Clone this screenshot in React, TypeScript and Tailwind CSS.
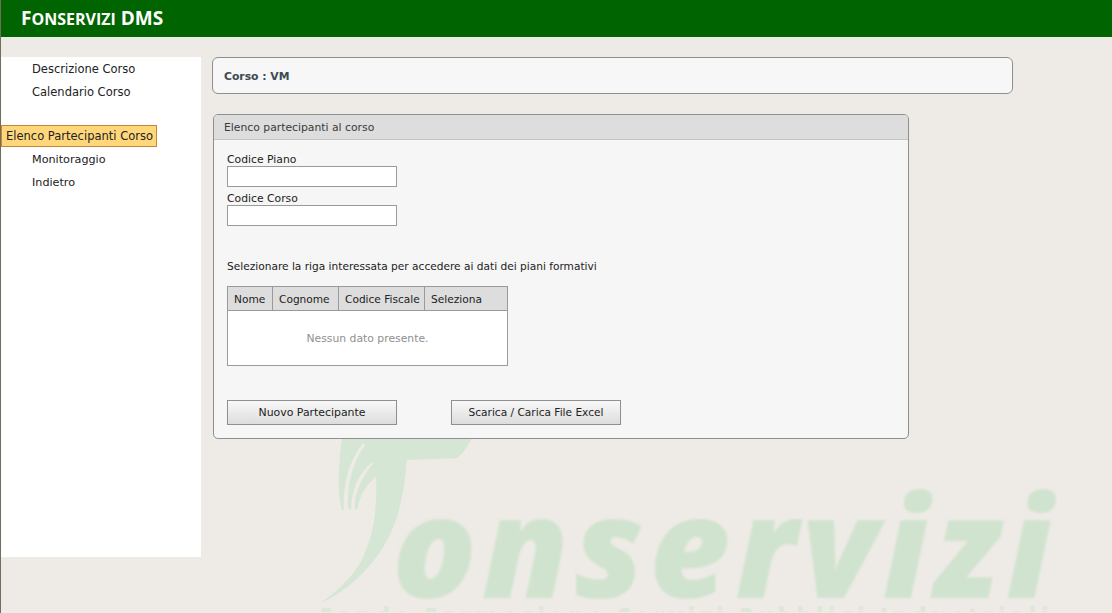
const menuTop = ["Descrizione Corso", "Calendario Corso"];
const menuBottom = ["Monitoraggio", "Indietro"];
const columns = [
  { label: "Nome", width: "w-[45px]" },
  { label: "Cognome", width: "w-[66px]" },
  { label: "Codice Fiscale", width: "w-[86px]" },
  { label: "Seleziona", width: "flex-1" },
];

function Watermark() {
  return (
    <div className="absolute left-0 top-0 w-[1112px] h-[612px] overflow-hidden text-[#d0e3cf] font-['Open_Sans',sans-serif] italic font-extrabold">
      <svg className="absolute left-[299px] top-[430px]" width="400" height="182" viewBox="0 0 1200 546">
        <path d="M130 0 C115 90 110 180 125 240 L132 240 C128 180 140 100 190 38 L195 45 C155 100 140 170 145 238 L153 238 C155 180 175 130 215 98 L220 100 C180 150 160 200 165 238 L172 238 C180 190 200 165 228 140 C232 240 222 320 180 400 C150 450 105 490 60 520 C130 490 200 430 250 350 C295 280 315 180 320 90 L470 85 C490 70 505 50 525 0 Z" fill="#d6e6d4" />
      </svg>
      <div className="absolute left-[391px] top-[449px] text-[140px] leading-[190px] tracking-[5px] whitespace-nowrap blur-[1px]">onservizi</div>
      <div className="absolute left-[319px] top-[600px] text-[22px] leading-[30px] tracking-[5px] not-italic whitespace-nowrap text-[#dbe7d8]">Fondo Formazione Servizi Pubblici Industriali</div>
    </div>
  );
}

function Button({ label, width, size }: { label: string; width: string; size: string }) {
  return (
    <button className={`${width} ${size} h-[25px] pt-[1px] border border-[#8f8f8f] bg-gradient-to-b from-[#f8f8f8] to-[#dddddd] text-[#222222] text-center`}>
      {label}
    </button>
  );
}

export default function App() {
  return (
    <div className="relative w-[1112px] h-[613px] overflow-hidden bg-[#eeebe6] border-l border-[#6f6f5f] font-['DejaVu_Sans',Verdana,sans-serif] text-[10.8px] text-[#222222]">
      <Watermark />
      <header className="relative h-[37px] bg-[#006400] pl-[20px] flex items-center text-white font-['Open_Sans',sans-serif] font-bold text-[19px] leading-none">
        <span>F<span className="text-[16px] uppercase">onservizi</span> DMS</span>
      </header>

      <div className="relative flex items-start pt-[20px]">
        <nav className="w-[200px] h-[500px] bg-white shrink-0 flex flex-col text-[11.5px] text-[#222222] pt-[1px]">
          {menuTop.map((item) => (
            <a key={item} className="h-[23px] leading-[23px] pl-[31px]">{item}</a>
          ))}
          <div className="h-[21px]" />
          <a className="w-[156px] h-[22px] leading-[20px] pl-[4px] bg-[#ffd77a] border border-[#c08a3a] whitespace-nowrap">Elenco Partecipanti Corso</a>
          {menuBottom.map((item) => (
            <a key={item} className="h-[23px] leading-[25px] pl-[31px] text-[11.2px]">{item}</a>
          ))}
        </nav>

        <main className="flex flex-col pl-[11px]">
          <div className="w-[801px] h-[37px] bg-[#f7f7f7] border border-[#8f8f8f] rounded-[6px] flex items-center pl-[11px] pt-[3px] font-bold text-[#3c4a55]">
            Corso : VM
          </div>

          <section className="w-[696px] h-[325px] mt-[20px] ml-[1px] bg-[#f6f6f6] border border-[#8f8f8f] rounded-[5px] overflow-hidden">
            <div className="h-[25px] leading-[25px] bg-[#dddddd] border-b border-[#c4c4c4] pl-[10px] text-[#3a3a3a]">
              Elenco partecipanti al corso
            </div>
            <div className="pl-[13px] pt-[12px] flex flex-col items-start">
              <label className="h-[14px] leading-[16px]">Codice Piano</label>
              <input className="w-[170px] h-[21px] bg-white border border-[#9a9a9a]" />
              <label className="h-[14px] leading-[16px] mt-[4px]">Codice Corso</label>
              <input className="w-[170px] h-[21px] bg-white border border-[#9a9a9a]" />

              <p className="mt-[32px] h-[14px] leading-[16px] text-[10.6px] whitespace-nowrap">Selezionare la riga interessata per accedere ai dati dei piani formativi</p>

              <div className="mt-[14px] w-[281px] h-[80px] border border-[#9a9a9a] bg-white">
                <div className="h-[24px] flex bg-[#dddddd] border-b border-[#9a9a9a] text-[10.6px]">
                  {columns.map((col, i) => (
                    <div key={col.label} className={`${col.width} pl-[6px] leading-[25px] whitespace-nowrap ${i < 3 ? "border-r border-[#9a9a9a]" : ""}`}>
                      {col.label}
                    </div>
                  ))}
                </div>
                <div className="h-[54px] pt-[2px] flex items-center justify-center text-[#8f8f8f]">Nessun dato presente.</div>
              </div>

              <div className="mt-[34px] flex gap-[54px]">
                <Button label="Nuovo Partecipante" width="w-[170px]" size="text-[10.9px]" />
                <Button label="Scarica / Carica File Excel" width="w-[170px]" size="text-[10.6px]" />
              </div>
            </div>
          </section>
        </main>
      </div>
    </div>
  );
}
